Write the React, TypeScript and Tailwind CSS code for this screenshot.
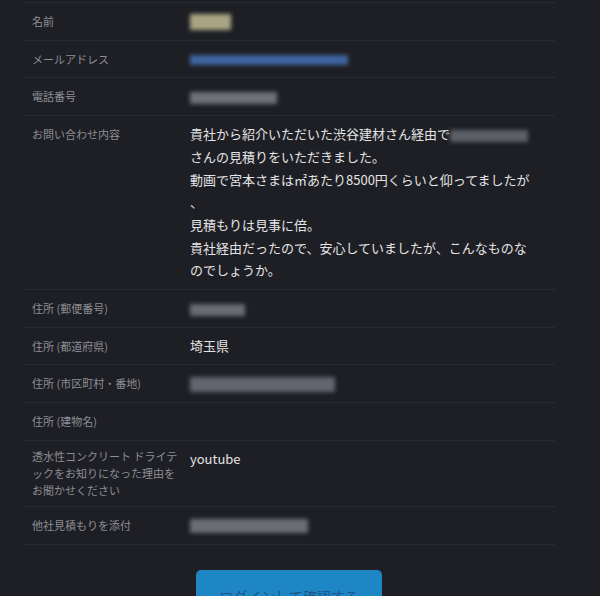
const font = { fontFamily: '"Noto Sans CJK JP", "Noto Sans", sans-serif' };

function Blur({ w, h, color }: { w: string; h: string; color: string }) {
  return <span className={`inline-block align-middle blur-[2px] ${w} ${h} ${color}`} />;
}

function Row({
  label,
  multi,
  children,
}: {
  label: React.ReactNode;
  multi?: boolean;
  children?: React.ReactNode;
}) {
  return (
    <div className="flex border-b border-[#2a2b31] py-[7px]">
      <div
        className={`w-[166px] shrink-0 whitespace-nowrap pl-2 text-[11px] leading-[17px] text-[#8d8e94] ${
          multi ? 'pt-0' : 'pt-[3px]'
        }`}
      >
        {label}
      </div>
      <div className="w-[350px] text-[13px] leading-[22.7px] text-[#e4e4e6]">{children}</div>
    </div>
  );
}

export default function App() {
  return (
    <div className="min-h-[596px] w-[600px] overflow-hidden bg-[#1e1f24] pt-[2px]" style={font}>
      <div className="ml-6 w-[531px] border-t border-[#2a2b31]">
        <Row label="名前">
          <Blur w="w-[41px]" h="h-[16px]" color="bg-[#a9a584]" />
        </Row>
        <Row label="メールアドレス">
          <Blur w="w-[158px]" h="h-[10px]" color="bg-[#3f64a0]" />
        </Row>
        <Row label="電話番号">
          <Blur w="w-[87px]" h="h-[12px]" color="bg-[#6f7179]" />
        </Row>
        <Row label="お問い合わせ内容">
          <div className="whitespace-nowrap">
            貴社から紹介いただいた渋谷建材さん経由で
            <Blur w="w-[78px]" h="h-[12px]" color="bg-[#5e6068]" />
          </div>
          <div>さんの見積りをいただきました。</div>
          <div className="whitespace-nowrap">動画で宮本さまは㎡あたり8500円くらいと仰ってましたが</div>
          <div>、</div>
          <div>見積もりは見事に倍。</div>
          <div className="whitespace-nowrap">貴社経由だったので、安心していましたが、こんなものな</div>
          <div>のでしょうか。</div>
        </Row>
        <Row label="住所 (郵便番号)">
          <Blur w="w-[55px]" h="h-[12px]" color="bg-[#6a6c74]" />
        </Row>
        <Row label="住所 (都道府県)">埼玉県</Row>
        <Row label="住所 (市区町村・番地)">
          <Blur w="w-[145px]" h="h-[15px]" color="bg-[#62656e]" />
        </Row>
        <Row label="住所 (建物名)">
          <span>&nbsp;</span>
        </Row>
        <Row
          multi
          label={
            <>
              透水性コンクリート ドライテ
              <br />
              ックをお知りになった理由を
              <br />
              お聞かせください
            </>
          }
        >
          youtube
        </Row>
        <Row label="他社見積もりを添付">
          <Blur w="w-[118px]" h="h-[14px]" color="bg-[#6b6d75]" />
        </Row>
      </div>
      <div className="mt-[25px] flex justify-center pr-[22px]">
        <button className="h-[44px] w-[186px] rounded-[5px] bg-[#1f86c5] pt-[8px] text-[14px] leading-[20px] text-[#1b5686]">
          ログインして確認する
        </button>
      </div>
    </div>
  );
}
